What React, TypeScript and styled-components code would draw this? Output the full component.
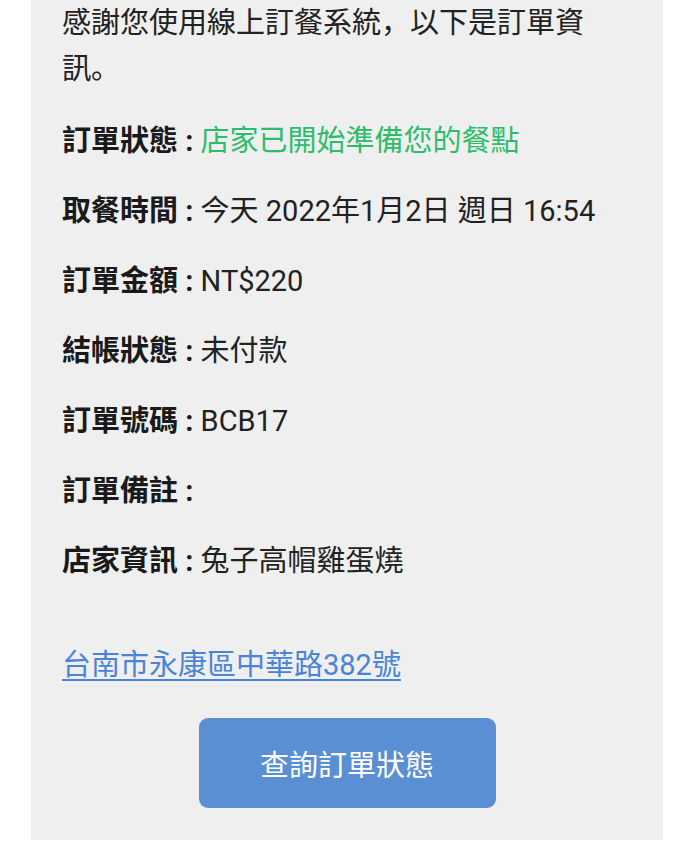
import * as React from 'react'
import styled, { createGlobalStyle } from 'styled-components'

const GlobalStyle = createGlobalStyle`
  html, body {
    margin: 0;
    padding: 0;
    background: #ffffff;
  }
  body {
    font-family: Roboto, 'Noto Sans CJK TC', 'Noto Sans', sans-serif;
    color: #222222;
  }
`

const Panel = styled.div`
  margin-left: 31px;
  width: 632px;
  box-sizing: border-box;
  padding: 0 31px 32px;
  background: #efefef;
`

// intro punctuation sits low-left in the reference, like the JP/SC forms
const Intro = styled.p`
  margin: 0 0 26px;
  font-family: Roboto, 'Noto Sans CJK JP', 'Noto Sans CJK TC', sans-serif;
  font-size: 29px;
  line-height: 46px;
`

const Row = styled.p`
  margin: 0 0 24px;
  font-size: 29px;
  line-height: 46px;
  white-space: nowrap;
`

const Label = styled.b`
  font-weight: 700;
  color: #1a1a1a;
`

const Value = styled.span<{ $tone?: 'ok' }>`
  color: ${(p) => (p.$tone === 'ok' ? '#2bbd6a' : '#222222')};
`

const Address = styled.a`
  display: block;
  margin-top: 58px;
  font-size: 29px;
  line-height: 46px;
  color: #4a84d8;
  text-decoration: underline;
  text-underline-offset: 4px;
`

const Actions = styled.div`
  display: flex;
  justify-content: center;
  margin-top: 30px;
`

const Button = styled.button`
  width: 297px;
  height: 90px;
  border: none;
  border-radius: 9px;
  background: #5b8fd4;
  color: #ffffff;
  font-family: Roboto, 'Noto Sans CJK TC', sans-serif;
  font-size: 29px;
  cursor: pointer;
`

interface Field {
  label: string
  value: string
  tone?: 'ok'
}

const fields: Field[] = [
  { label: '訂單狀態', value: '店家已開始準備您的餐點', tone: 'ok' },
  { label: '取餐時間', value: '今天 2022年1月2日 週日 16:54' },
  { label: '訂單金額', value: 'NT$220' },
  { label: '結帳狀態', value: '未付款' },
  { label: '訂單號碼', value: 'BCB17' },
  { label: '訂單備註', value: '' },
  { label: '店家資訊', value: '兔子高帽雞蛋燒' },
]

export default function App() {
  return (
    <>
      <GlobalStyle />
      <Panel>
        <Intro>感謝您使用線上訂餐系統，以下是訂單資訊。</Intro>
        {fields.map((f) => (
          <Row key={f.label}>
            <Label>{f.label} :</Label> <Value $tone={f.tone}>{f.value}</Value>
          </Row>
        ))}
        <Address href="#">台南市永康區中華路382號</Address>
        <Actions>
          <Button>查詢訂單狀態</Button>
        </Actions>
      </Panel>
    </>
  )
}
